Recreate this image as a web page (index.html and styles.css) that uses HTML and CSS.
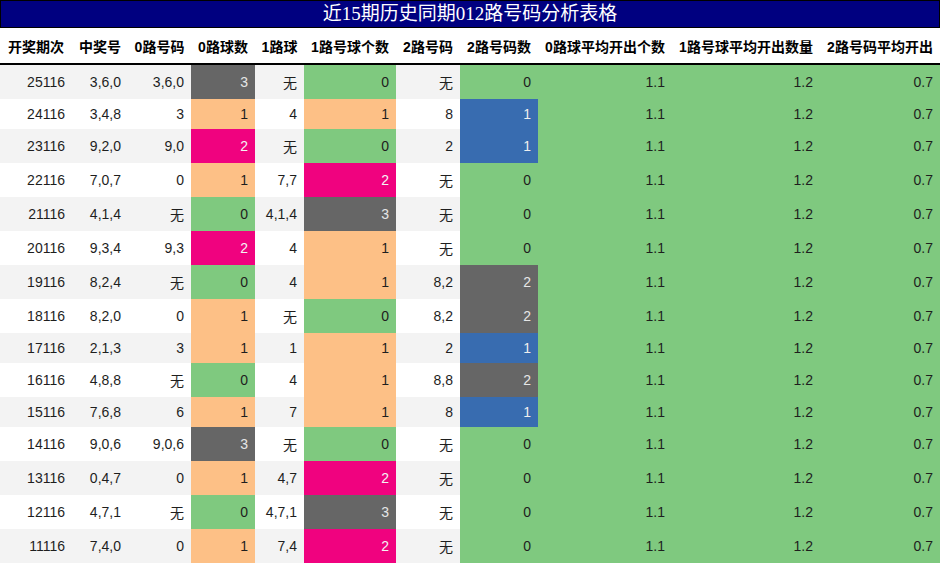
FILE: index.html
```html
<!DOCTYPE html>
<html lang="zh">
<head>
<meta charset="utf-8">
<title>近15期历史同期012路号码分析表格</title>
<link rel="stylesheet" href="styles.css">
</head>
<body>
<div class="page">
  <div class="title">近15期历史同期012路号码分析表格</div>
  <table class="grid">
    <colgroup>
      <col class="c1"><col class="c2"><col class="c3"><col class="c4"><col class="c5"><col class="c6"><col class="c7"><col class="c8"><col class="c9"><col class="c10"><col class="c11">
    </colgroup>
    <thead>
      <tr>
        <th>开奖期次</th><th>中奖号</th><th>0路号码</th><th>0路球数</th><th>1路球</th><th>1路号球个数</th><th>2路号码</th><th>2路号码数</th><th>0路球平均开出个数</th><th>1路号球平均开出数量</th><th>2路号码平均开出</th>
      </tr>
    </thead>
    <tbody>
      <tr><td>25116</td><td>3,6,0</td><td>3,6,0</td><td class="k3">3</td><td>无</td><td class="k0">0</td><td>无</td><td class="k0">0</td><td class="k0">1.1</td><td class="k0">1.2</td><td class="k0">0.7</td></tr>
      <tr><td>24116</td><td>3,4,8</td><td>3</td><td class="k1">1</td><td>4</td><td class="k1">1</td><td>8</td><td class="kb">1</td><td class="k0">1.1</td><td class="k0">1.2</td><td class="k0">0.7</td></tr>
      <tr><td>23116</td><td>9,2,0</td><td>9,0</td><td class="k2">2</td><td>无</td><td class="k0">0</td><td>2</td><td class="kb">1</td><td class="k0">1.1</td><td class="k0">1.2</td><td class="k0">0.7</td></tr>
      <tr><td>22116</td><td>7,0,7</td><td>0</td><td class="k1">1</td><td>7,7</td><td class="k2">2</td><td>无</td><td class="k0">0</td><td class="k0">1.1</td><td class="k0">1.2</td><td class="k0">0.7</td></tr>
      <tr><td>21116</td><td>4,1,4</td><td>无</td><td class="k0">0</td><td>4,1,4</td><td class="k3">3</td><td>无</td><td class="k0">0</td><td class="k0">1.1</td><td class="k0">1.2</td><td class="k0">0.7</td></tr>
      <tr><td>20116</td><td>9,3,4</td><td>9,3</td><td class="k2">2</td><td>4</td><td class="k1">1</td><td>无</td><td class="k0">0</td><td class="k0">1.1</td><td class="k0">1.2</td><td class="k0">0.7</td></tr>
      <tr><td>19116</td><td>8,2,4</td><td>无</td><td class="k0">0</td><td>4</td><td class="k1">1</td><td>8,2</td><td class="k3">2</td><td class="k0">1.1</td><td class="k0">1.2</td><td class="k0">0.7</td></tr>
      <tr><td>18116</td><td>8,2,0</td><td>0</td><td class="k1">1</td><td>无</td><td class="k0">0</td><td>8,2</td><td class="k3">2</td><td class="k0">1.1</td><td class="k0">1.2</td><td class="k0">0.7</td></tr>
      <tr><td>17116</td><td>2,1,3</td><td>3</td><td class="k1">1</td><td>1</td><td class="k1">1</td><td>2</td><td class="kb">1</td><td class="k0">1.1</td><td class="k0">1.2</td><td class="k0">0.7</td></tr>
      <tr><td>16116</td><td>4,8,8</td><td>无</td><td class="k0">0</td><td>4</td><td class="k1">1</td><td>8,8</td><td class="k3">2</td><td class="k0">1.1</td><td class="k0">1.2</td><td class="k0">0.7</td></tr>
      <tr><td>15116</td><td>7,6,8</td><td>6</td><td class="k1">1</td><td>7</td><td class="k1">1</td><td>8</td><td class="kb">1</td><td class="k0">1.1</td><td class="k0">1.2</td><td class="k0">0.7</td></tr>
      <tr><td>14116</td><td>9,0,6</td><td>9,0,6</td><td class="k3">3</td><td>无</td><td class="k0">0</td><td>无</td><td class="k0">0</td><td class="k0">1.1</td><td class="k0">1.2</td><td class="k0">0.7</td></tr>
      <tr><td>13116</td><td>0,4,7</td><td>0</td><td class="k1">1</td><td>4,7</td><td class="k2">2</td><td>无</td><td class="k0">0</td><td class="k0">1.1</td><td class="k0">1.2</td><td class="k0">0.7</td></tr>
      <tr><td>12116</td><td>4,7,1</td><td>无</td><td class="k0">0</td><td>4,7,1</td><td class="k3">3</td><td>无</td><td class="k0">0</td><td class="k0">1.1</td><td class="k0">1.2</td><td class="k0">0.7</td></tr>
      <tr><td>11116</td><td>7,4,0</td><td>0</td><td class="k1">1</td><td>7,4</td><td class="k2">2</td><td>无</td><td class="k0">0</td><td class="k0">1.1</td><td class="k0">1.2</td><td class="k0">0.7</td></tr>
    </tbody>
  </table>
</div>
</body>
</html>
```
FILE: styles.css
```css
html, body {
  margin: 0;
  padding: 0;
  background: #ffffff;
}

.page {
  width: 940px;
}

.title {
  box-sizing: border-box;
  height: 28px;
  border: 1px solid #000000;
  background: #000080;
  color: #ffffff;
  font-family: "Liberation Serif", "Noto Sans CJK SC", serif;
  font-size: 19px;
  line-height: 26px;
  text-align: center;
}

.grid {
  width: 940px;
  table-layout: fixed;
  border-collapse: separate;
  border-spacing: 0;
  font-family: "Liberation Sans", "Noto Sans CJK SC", sans-serif;
  font-size: 14px;
  color: #1e1e1e;
}

.c1 { width: 72px; }
.c2 { width: 56px; }
.c3 { width: 63px; }
.c4 { width: 64px; }
.c5 { width: 49px; }
.c6 { width: 92px; }
.c7 { width: 64px; }
.c8 { width: 78px; }
.c9 { width: 134px; }
.c10 { width: 148px; }
.c11 { width: 120px; }

.grid th {
  padding: 8px 0 7px;
  font-weight: bold;
  color: #000000;
  text-align: center;
  white-space: nowrap;
  border-bottom: 2px solid #000000;
  background: #ffffff;
}

.grid td {
  padding: 7px 7px 7px 0;
  text-align: right;
  white-space: nowrap;
}

.grid tbody tr:nth-child(odd) td {
  background: #f3f3f3;
}

.grid tbody tr:nth-child(even) td {
  background: #ffffff;
}

.grid tbody tr td.k0 { background: #7fc97f; color: #1e1e1e; }
.grid tbody tr td.k1 { background: #fdc086; color: #1e1e1e; }
.grid tbody tr td.k2 { background: #f0027f; color: #f4f4f4; }
.grid tbody tr td.k3 { background: #666666; color: #e6e6e6; }
.grid tbody tr td.kb { background: #386cb0; color: #eeeeee; }
```
